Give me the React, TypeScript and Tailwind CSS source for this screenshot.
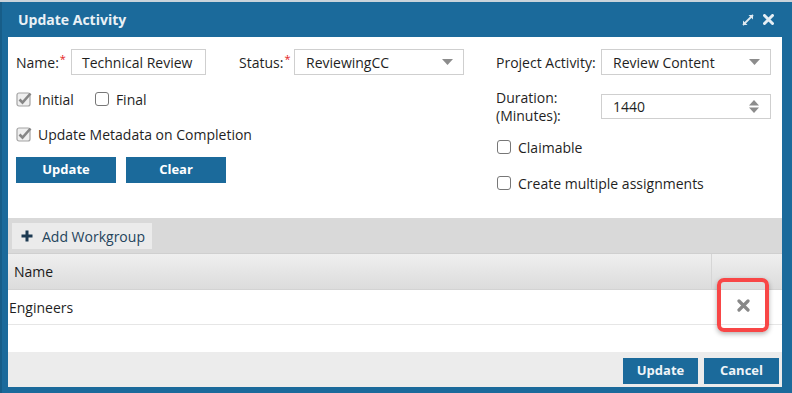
import React from "react";

function Caret() {
  return (
    <svg width="11" height="6" viewBox="0 0 11 6" className="shrink-0">
      <path d="M0 0 L11 0 L5.5 6 Z" fill="#8c8c8c" />
    </svg>
  );
}

function Spinner() {
  return (
    <svg width="10" height="13" viewBox="0 0 10 13" className="shrink-0">
      <path d="M0 5.5 L10 5.5 L5 0 Z" fill="#8c8c8c" />
      <path d="M0 7.5 L10 7.5 L5 13 Z" fill="#8c8c8c" />
    </svg>
  );
}

function CheckedBox() {
  return (
    <svg width="16" height="16" viewBox="0 0 16 16" className="shrink-0">
      <rect x="1" y="2" width="13" height="13" rx="2" fill="#efefef" stroke="#a3a3a3" strokeWidth="1.2" />
      <path d="M3.5 8.5 L6.5 11.5 L14.5 2.5" fill="none" stroke="#868686" strokeWidth="2.6" />
    </svg>
  );
}

function EmptyBox() {
  return <div className="w-[14px] h-[14px] rounded-[3px] border border-[#777] bg-white shrink-0" />;
}

function Req() {
  return <span className="text-[#e52222] text-[11px] relative -top-[5px] ml-[1px]">*</span>;
}

export default function App() {
  return (
    <div
      className="w-[792px] h-[393px] overflow-hidden flex flex-col"
      style={{ fontFamily: "'Open Sans', 'Noto Sans', sans-serif" }}
    >
      <div className="h-[2px] bg-[#c9d3db] shrink-0" />
      <div className="flex-1 flex flex-col bg-[#1b6a9b] pl-[6px] pr-[10px] pb-[6px] border-l-[2px] border-[#175d88]">
        {/* Title bar */}
        <div className="h-[35px] shrink-0 flex items-center justify-between pl-[10px] pr-[8px]">
          <span className="text-[14px] font-bold text-[#eaf1f6]">Update Activity</span>
          <div className="flex items-center gap-[9px]">
            <svg width="12" height="12" viewBox="0 0 12 12">
              <path d="M1 11 L11 1" stroke="#dfe9f0" strokeWidth="1.8" />
              <path d="M6.5 1 L11 1 L11 5.5 Z" fill="#dfe9f0" />
              <path d="M1 6.5 L1 11 L5.5 11 Z" fill="#dfe9f0" />
            </svg>
            <svg width="11" height="11" viewBox="0 0 11 11">
              <path d="M1.5 1.5 L9.5 9.5 M9.5 1.5 L1.5 9.5" stroke="#e6eef4" strokeWidth="3" strokeLinecap="round" />
            </svg>
          </div>
        </div>

        {/* Body */}
        <div className="flex-1 bg-white flex flex-col relative text-[14px] text-[#1f1f1f]">
          {/* Form */}
          <div className="h-[181px] shrink-0 flex pt-[12px] pl-[8px]">
            {/* Left column */}
            <div className="w-[480px] flex flex-col">
              <div className="flex items-center h-[26px]">
                <div className="w-[55px]">
                  Name:<Req />
                </div>
                <div className="w-[135px] h-[26px] border border-[#cfcfcf] flex items-center pl-[10px]">Technical Review</div>
                <div className="w-[55px] ml-[33px]">
                  Status:<Req />
                </div>
                <div className="w-[170px] h-[26px] border border-[#cfcfcf] flex items-center justify-between pl-[11px] pr-[10px]">
                  <span>ReviewingCC</span>
                  <Caret />
                </div>
              </div>
              <div className="flex items-center h-[20px] mt-[14px]">
                <CheckedBox />
                <span className="ml-[6px]">Initial</span>
                <div className="ml-[21px]">
                  <EmptyBox />
                </div>
                <span className="ml-[7px]">Final</span>
              </div>
              <div className="flex items-center h-[20px] mt-[15px]">
                <CheckedBox />
                <span className="ml-[6px]">Update Metadata on Completion</span>
              </div>
              <div className="flex mt-[13px] gap-[10px]">
                <div className="w-[100px] h-[26px] bg-[#1b6a9b] text-white text-[13px] font-bold flex items-center justify-center">Update</div>
                <div className="w-[100px] h-[26px] bg-[#1b6a9b] text-white text-[13px] font-bold flex items-center justify-center">Clear</div>
              </div>
            </div>
            {/* Right column */}
            <div className="flex flex-col">
              <div className="flex items-center h-[26px]">
                <div className="w-[105px]">Project Activity:</div>
                <div className="w-[170px] h-[26px] border border-[#cfcfcf] flex items-center justify-between pl-[11px] pr-[10px]">
                  <span>Review Content</span>
                  <Caret />
                </div>
              </div>
              <div className="flex items-center mt-[18px] h-[26px]">
                <div className="w-[105px] flex flex-col mt-[2px]">
                  <span className="leading-[18px]">Duration:</span>
                  <span className="leading-[18px]">(Minutes):</span>
                </div>
                <div className="w-[170px] h-[25px] border border-[#cfcfcf] flex items-center justify-between pl-[11px] pr-[11px]">
                  <span>1440</span>
                  <Spinner />
                </div>
              </div>
              <div className="flex items-center h-[20px] mt-[18px] pl-[1px]">
                <EmptyBox />
                <span className="ml-[7px]">Claimable</span>
              </div>
              <div className="flex items-center h-[20px] mt-[16px] pl-[1px]">
                <EmptyBox />
                <span className="ml-[7px]">Create multiple assignments</span>
              </div>
            </div>
          </div>

          {/* Toolbar band */}
          <div className="h-[36px] shrink-0 bg-[#d9d9d9] pt-[5px] pl-[4px] border-b border-[#cfcfcf]">
            <div className="w-[140px] h-[26px] bg-[#ebebeb] flex items-center pl-[9px] text-[#24445c]">
              <svg width="12" height="12" viewBox="0 0 12 12" className="shrink-0">
                <path d="M6 0.5 V11.5 M0.5 6 H11.5" stroke="#1d3a52" strokeWidth="3" />
              </svg>
              <span className="ml-[9px] text-[14px]">Add Workgroup</span>
            </div>
          </div>

          {/* Header */}
          <div className="h-[36px] shrink-0 flex bg-gradient-to-b from-[#efefef] to-[#dcdcdc] border-b border-[#d3d3d3]">
            <div className="flex-1 flex items-center pl-[6px] text-[#1a1a1a]">Name</div>
            <div className="w-[71px] border-l border-[#d6d6d6]" />
          </div>

          {/* Row */}
          <div className="h-[35px] shrink-0 flex items-center justify-between border-b border-[#e6e6e6] pl-[1px]">
            <span>Engineers</span>
          </div>
          <div className="h-[27px] shrink-0 bg-white" />

          {/* Footer */}
          <div className="flex-1 bg-[#ececec] flex justify-end items-start pt-[6px] pr-[3px] gap-[6px]">
            <div className="w-[75px] h-[26px] bg-[#1b6a9b] text-[#eef4f8] text-[13px] font-bold flex items-center justify-center">Update</div>
            <div className="w-[75px] h-[26px] bg-[#1b6a9b] text-[#eef4f8] text-[13px] font-bold flex items-center justify-center">Cancel</div>
          </div>

          {/* Highlight overlay on delete icon */}
          <div className="absolute left-[709px] top-[241px] w-[52px] h-[54px] rounded-[7px] border-[4px] border-[#f84646] shadow-[0_2px_5px_rgba(0,0,0,0.3)] flex items-center justify-center">
            <svg width="13" height="13" viewBox="0 0 13 13">
              <path d="M2 2 L11 11 M11 2 L2 11" stroke="#888888" strokeWidth="3.2" strokeLinecap="round" />
            </svg>
          </div>
        </div>
      </div>
    </div>
  );
}
